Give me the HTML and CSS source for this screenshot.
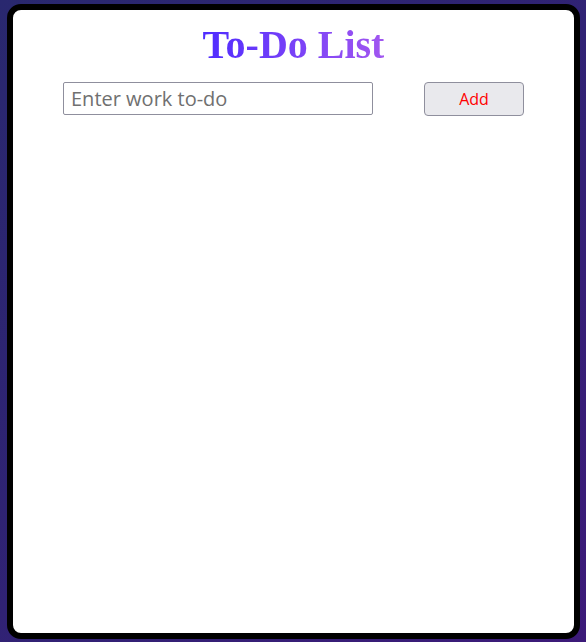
FILE: index.html
```html
<!DOCTYPE html>
<html>
<head>
<meta charset="utf-8">
<link rel="stylesheet" href="styles.css">
</head>
<body>
<div class="card">
  <h1 class="title">To-Do List</h1>
  <div class="row">
    <input class="task-input" type="text" placeholder="Enter work to-do">
    <button class="add-btn">Add</button>
  </div>
  <ul class="list"></ul>
</div>
</body>
</html>
```
FILE: styles.css
```css
html, body {
  margin: 0;
  height: 100%;
}
body {
  background: linear-gradient(135deg, #29286f 0%, #302274 50%, #3c1a79 100%);
  padding: 4px 6px 3px 7px;
  box-sizing: border-box;
  display: flex;
}
.card {
  flex: 1;
  background: #fff;
  border: 6px solid #000;
  border-radius: 14px;
  display: flex;
  flex-direction: column;
  align-items: center;
}
.title {
  font-family: "Liberation Serif", serif;
  font-weight: bold;
  font-size: 40px;
  line-height: 46px;
  margin: 12px 0 0 0;
  background: linear-gradient(90deg, #4f2cff 0%, #a156f0 100%);
  -webkit-background-clip: text;
  background-clip: text;
  color: transparent;
}
.row {
  display: flex;
  gap: 51px;
  margin-top: 14px;
}
.task-input {
  width: 310px;
  height: 33px;
  box-sizing: border-box;
  border: 1px solid #8f8f9d;
  border-radius: 2px;
  padding: 0 7px;
  font-family: "Open Sans", sans-serif;
  font-size: 20px;
  color: #333;
}
.task-input::placeholder {
  color: #707070;
}
.add-btn {
  width: 100px;
  height: 34px;
  box-sizing: border-box;
  background: #e9e9ed;
  border: 1px solid #8f8f9d;
  border-radius: 4px;
  color: #ff0000;
  font-family: "Open Sans", sans-serif;
  font-size: 16px;
}
.list {
  margin: 0;
  padding: 0;
}
```
